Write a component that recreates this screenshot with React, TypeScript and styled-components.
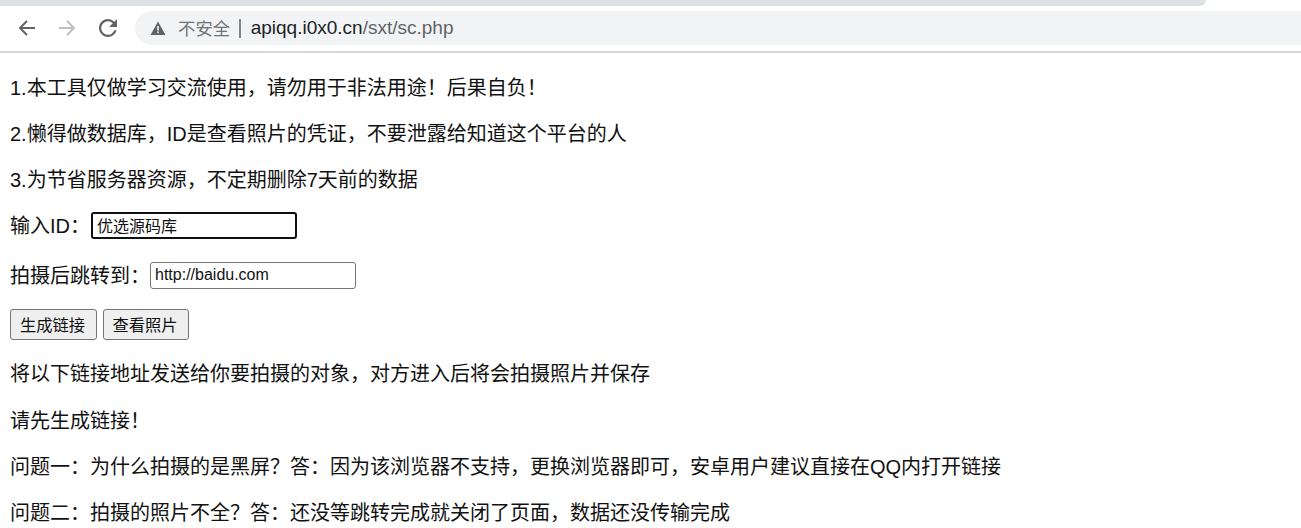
import React from "react";
import styled, { createGlobalStyle } from "styled-components";

const Global = createGlobalStyle`
  html, body { margin: 0; padding: 0; background: #fff; overflow: hidden; }
  body { font-family: "Liberation Sans", "Noto Sans CJK SC", sans-serif; color: #111; }
`;
const Page = styled.div`width: 1301px; height: 528px; overflow: hidden;`;
const TabStrip = styled.div`height: 6px; width: 1206px; background: #dee1e6; border-bottom-right-radius: 6px;`;
const Toolbar = styled.div`
  height: 40px; display: flex; align-items: flex-start; padding-top: 5px;
  border-bottom: 2px solid #d9d9d9;
`;
const NavGroup = styled.div`display: flex; align-items: center; height: 34px; width: 135px; padding-left: 17px; gap: 20px; box-sizing: border-box;`;
const Omnibox = styled.div`
  flex: 1; height: 34px; background: #f1f3f4; border-radius: 17px 0 0 17px; display: flex; align-items: center;
  padding-left: 15px; font-size: 19px; color: #5f6368;
`;
const Warn = styled.span`color: #5f6368; display: inline-flex; margin-right: 12px;`;
const NotSecure = styled.span`font-size: 17.4px; color: #6f7377; margin-bottom: 2px;`;
const Sep = styled.span`margin: 0 10px 0 9px; width: 1.5px; height: 19px; background: #80868b;`;
const Host = styled.span`color: #202124;`;
const Content = styled.main`padding: 21px 10px 0;`;
const Line = styled.p<{ $mb?: number }>`
  margin: 0 0 ${p => p.$mb ?? 20}px; height: 26px; line-height: 28px;
  font-size: 20px; white-space: nowrap;
`;
const FieldRow = styled.div<{ $mb: number }>`
  display: flex; align-items: center; height: 27px; margin-bottom: ${p => p.$mb}px;
  font-size: 20px; white-space: nowrap;
`;
const FieldLabel = styled.span`margin-bottom: 2px;`;
const Field = styled.input<{ $focus?: boolean }>`
  box-sizing: border-box; width: 206px; height: 27px; margin-left: ${p => (p.$focus ? "1px" : "0")}; background: #fff; color: #111;
  font: 16px "Liberation Sans", "Noto Sans CJK SC", sans-serif; outline: none; border-radius: 3px;
  border: ${p => (p.$focus ? "2px solid #101010" : "1px solid #767676")};
  padding: 0 4px 2px;
`;
const Buttons = styled.div`display: flex; gap: 6px; margin-bottom: 20px; height: 31px;`;
const Btn = styled.button`
  box-sizing: border-box; height: 31px; width: 87px; padding: 0 2px 2px 0; font: 16.3px "Liberation Sans", "Noto Sans CJK SC", sans-serif;
  color: #111; background: #efefef; border: 1px solid #767676; border-radius: 3px;
  & + & { width: 86px; }
`;
const ReloadIcon = styled.svg`margin-left: 2px;`;

const Arrow = ({ color, flip }: { color: string; flip?: boolean }) => (
  <svg width="20" height="20" viewBox="0 0 20 20" fill="none" stroke={color} strokeWidth="2" style={flip ? { transform: "scaleX(-1)" } : undefined}>
    <path d="M18 10H3M10 3l-7 7 7 7" />
  </svg>
);
const Reload = () => (
  <ReloadIcon width="18" height="18" viewBox="4 4 16 16" fill="#5f6368">
    <path d="M17.65 6.35A7.96 7.96 0 0 0 12 4a8 8 0 1 0 7.73 10h-2.08A6 6 0 1 1 12 6c1.66 0 3.14.69 4.22 1.78L13 11h7V4l-2.35 2.35z" />
  </ReloadIcon>
);
const Triangle = () => (
  <svg width="16" height="15" viewBox="0 0 16 15" fill="currentColor">
    <path d="M8 0.5 15.5 14H.5z" />
    <rect x="7.2" y="5" width="1.6" height="4.5" fill="#f1f3f4" />
    <rect x="7.2" y="10.5" width="1.6" height="1.6" fill="#f1f3f4" />
  </svg>
);

export default function App() {
  return (
    <Page>
      <Global />
      <TabStrip />
      <Toolbar>
        <NavGroup>
          <Arrow color="#5f6368" />
          <Arrow color="#bdc1c6" flip />
          <Reload />
        </NavGroup>
        <Omnibox>
          <Warn><Triangle /></Warn>
          <NotSecure>不安全</NotSecure>
          <Sep />
          <Host>apiqq.i0x0.cn</Host>/sxt/sc.php
        </Omnibox>
      </Toolbar>
      <Content>
        <Line>1.本工具仅做学习交流使用，请勿用于非法用途！后果自负！</Line>
        <Line>2.懒得做数据库，ID是查看照片的凭证，不要泄露给知道这个平台的人</Line>
        <Line>3.为节省服务器资源，不定期删除7天前的数据</Line>
        <FieldRow $mb={23}><FieldLabel>输入ID：</FieldLabel><Field $focus defaultValue="优选源码库" /></FieldRow>
        <FieldRow $mb={20}><FieldLabel>拍摄后跳转到：</FieldLabel><Field defaultValue="http://baidu.com" /></FieldRow>
        <Buttons>
          <Btn>生成链接</Btn>
          <Btn>查看照片</Btn>
        </Buttons>
        <Line $mb={21}>将以下链接地址发送给你要拍摄的对象，对方进入后将会拍摄照片并保存</Line>
        <Line>请先生成链接！</Line>
        <Line>问题一：为什么拍摄的是黑屏？答：因为该浏览器不支持，更换浏览器即可，安卓用户建议直接在QQ内打开链接</Line>
        <Line>问题二：拍摄的照片不全？答：还没等跳转完成就关闭了页面，数据还没传输完成</Line>
      </Content>
    </Page>
  );
}
